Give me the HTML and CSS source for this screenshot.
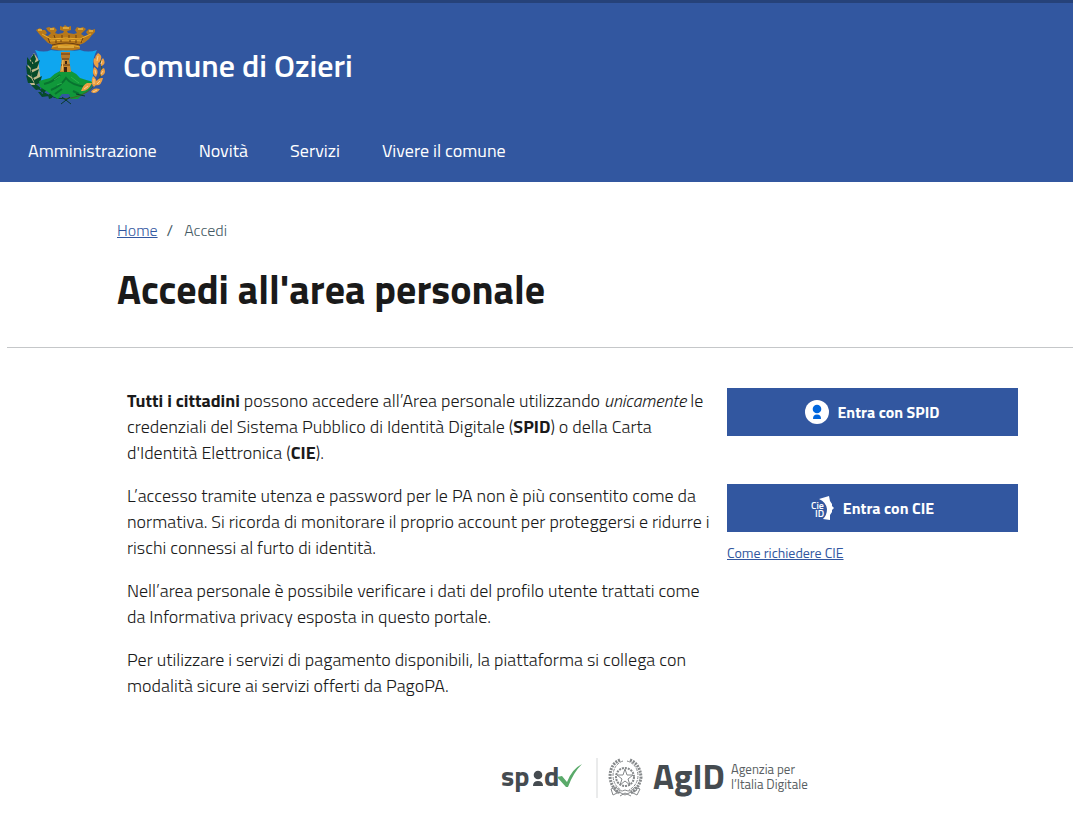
FILE: index.html
```html
<!DOCTYPE html>
<html lang="it">
<head>
  <meta charset="UTF-8">
  <meta name="viewport" content="width=device-width, initial-scale=1.0">
  <title>Accedi all'area personale - Comune di Ozieri</title>
  <link rel="stylesheet" href="styles.css">
</head>
<body>
  <header class="header">
    <div class="brand">
      <svg class="crest" viewBox="0 0 80 80" aria-hidden="true">
        <!-- Shield -->
        <path d="M9 25Q18 28 25 25Q33 27 40 24Q47 27 54 25Q62 28 71 25Q67 32 67 41V57H13V40Q13 32 9 25Z" fill="#0fa6ef"/>
        <!-- Laurel -->
        <path d="M8 28Q-1 40 2 50Q2 60 8 61L15 57L12 34Z" fill="#bfb98b"/>
        <path d="M8 29Q1 45 11 62Q22 74 41 74" stroke="#073f26" stroke-width="1" fill="none"/>
        <path d="M8 29L10 34L8 39L4 34ZM5 37L1 32L1 39L5 43ZM6 39L14 35L11 43L5 45ZM4 44L0 40L1 49L6 52ZM5 48L13 44L11 51L7 53ZM5 53L0 50L2 58L8 58ZM8 55L16 51L14 58L9 60ZM11 60L5 60L10 65L16 64ZM14 63L20 58L20 66L16 69ZM18 67L12 67L16 72L23 71ZM22 70L28 66L26 73L23 74Z" fill="#064b2a"/>
        <!-- Hill -->
        <path d="M13 56Q20 54 24 53Q29 48 34 46H45Q50 48 54 53Q60 55 67 57Q65 66 56 70L52 74H45L43 69H36L32 74L27 71L22 67L14 62Z" fill="#10983a"/>
        <path d="M18 59Q27 57 34 50M25 65Q35 61 40 53Q45 60 60 62M29 69L36 64M47 66L53 69" stroke="#087330" stroke-width="2" fill="none"/>
        <path d="M28 55L34 51M45 52L53 58M31 60L36 58" stroke="#28b14a" stroke-width="1" fill="none"/>
        <!-- Tower -->
        <path d="M36 33H43L45 47H34Z" fill="#c98a31"/>
        <path d="M35 27H44V32L43 35H36L35 32Z" fill="#b67b2a"/>
        <path d="M35 29H44M36 34H43M35 40H44" stroke="#613915" stroke-width="1"/>
        <path d="M39 36H41V39H39ZM38 42H41V47H38Z" fill="#3c240f"/>
        <path d="M37 35L36 46" stroke="#f1c565" stroke-width="1"/>
        <!-- Crown -->
        <path d="M10 5L14 3L16 5L19 5L21 8L19 10L22 11L25 8L22 6L20 3L23 2L25 3L28 2L31 5L29 8L32 9L37 8L38 6L34 5L34 1L37 2L39 0L42 2L45 1L45 5L41 6L42 8L48 9L51 8L49 5L51 2L54 3L57 2L60 4L57 7L55 9L58 11L62 10L60 7L63 4L66 5L69 4L69 7L66 10L63 14L58 18L53 20L54 24Q40 27 25 24L27 20L22 18L18 14L14 10Z" fill="#b77819"/>
        <path d="M16 9L25 14Q40 12 54 14L65 9M23 16Q40 14 57 16M26 22Q40 18 54 22" stroke="#e9ac2e" stroke-width="1" fill="none"/>
        <path d="M22 13L24 18M28 10L29 13M30 15V18M36 10V13M35 15V17M44 15V17M43 10V13M50 10V13M50 15V18M57 13L55 18M26 20Q40 16 54 20" stroke="#6c3f11" stroke-width="1" fill="none"/>
        <path d="M12 5H16M24 4H28M37 3H43M52 4H57M63 6H67M32 22H48" stroke="#ffd35d" stroke-width="1"/>
        <!-- Oak -->
        <path d="M72 30Q82 48 67 62Q58 72 38 74" stroke="#456023" stroke-width="1" fill="none"/>
        <path d="M72 28Q66 34 73 38Q78 31 72 28ZM68 33Q66 40 72 43Q74 36 68 33ZM77 33Q74 35 75 41Q81 39 77 33ZM68 42Q65 49 70 52Q74 45 68 42ZM78 43Q73 45 75 51Q81 49 78 43ZM67 51Q64 58 68 62Q74 57 67 51ZM77 53Q71 52 69 60Q75 62 77 53ZM61 58Q57 60 55 66Q62 67 66 58ZM74 64Q67 62 65 67Q70 70 74 64Z" fill="#ed9f42"/>
        <path d="M72 31L71 36M76 36L75 39M69 45L70 49M77 46L75 49M68 54V59M74 56L71 59M62 61L58 64M71 65L67 67" stroke="#f8d296" stroke-width="1"/>
        <path d="M50 69L59 71M35 79L44 72M45 79L36 72" stroke="#083d2b" stroke-width="1"/>
      </svg>
      <span class="brand-name">Comune di Ozieri</span>
    </div>
    <nav class="nav">
      <a href="#">Amministrazione</a>
      <a href="#">Novità</a>
      <a href="#">Servizi</a>
      <a href="#">Vivere il comune</a>
    </nav>
  </header>

  <main>
    <div class="page-title">
      <nav class="breadcrumb" aria-label="Percorso">
        <a href="#">Home</a>
        <span class="separator">/</span>
        <span>Accedi</span>
      </nav>
      <h1>Accedi all'area personale</h1>
    </div>

    <div class="content">
      <div class="description">
        <p><strong>Tutti i cittadini</strong> possono accedere all’Area personale utilizzando <em>unicamente</em> le credenziali del Sistema Pubblico di Identità Digitale (<strong>SPID</strong>) o della Carta d'Identità Elettronica (<strong>CIE</strong>).</p>
        <p>L’accesso tramite utenza e password per le PA non è più consentito come da normativa. Si ricorda di monitorare il proprio account per proteggersi e ridurre i rischi connessi al furto di identità.</p>
        <p>Nell’area personale è possibile verificare i dati del profilo utente trattati come da Informativa privacy esposta in questo portale.</p>
        <p>Per utilizzare i servizi di pagamento disponibili, la piattaforma si collega con modalità sicure ai servizi offerti da PagoPA.</p>
      </div>
      <div class="access">
        <button class="btn" type="button">
          <svg width="24" height="24" viewBox="0 0 24 24" aria-hidden="true">
            <circle cx="12" cy="12" r="12" fill="#fff"/>
            <circle cx="12" cy="9" r="4.3" fill="#06d"/>
            <path d="M8 19C8 16 9 14.5 12 14.5S16 16 16 19Z" fill="#06d"/>
          </svg>
          Entra con SPID
        </button>
        <button class="btn" type="button">
          <svg width="24" height="24" viewBox="0 0 24 24" aria-hidden="true">
            <path d="M8 3L18 0L19 5L21 8L21 10L23 12L21 14L21 16L19 19L19 24L12 23Q16 19 16 13Q15 6 8 3Z" fill="#fff"/>
            <text class="cie-text" x="0" y="13">Cie</text>
            <text class="cie-text" x="4" y="21">ID</text>
          </svg>
          Entra con CIE
        </button>
        <a class="help-link" href="#">Come richiedere CIE</a>
      </div>
    </div>
  </main>

  <footer class="footer">
    <svg class="partners" viewBox="0 0 308 42" role="img" aria-label="SPID, AgID Agenzia per l'Italia Digitale">
      <text class="spid-text" x="0" y="29">sp</text>
      <circle cx="37" cy="18" r="4.3" fill="#454b50"/>
      <path d="M32 29Q32 24 37 24T42 29Z" fill="#454b50"/>
      <text class="spid-text" x="43" y="29">d</text>
      <path d="M56 20L61 19L66 25Q71 12 81 7Q72 16 67 30H65Z" fill="#5aaa6a"/>
      <path d="M96 1V41" stroke="#d5d7d8"/>
      <!-- Emblem of the Republic -->
      <g fill="none" stroke="#85888a">
        <circle cx="124" cy="20" r="9" stroke-width="2" stroke-dasharray="2 1"/>
        <path d="M124 12L126 18L132 18L127 22L129 28L124 24L119 28L121 22L116 18L122 18Z" fill="#fff"/>
        <path d="M119 3Q109 7 109 20Q110 30 118 36M129 3Q139 7 140 20Q139 30 130 36" stroke-width="3" stroke-dasharray="2 1"/>
        <path d="M122 4Q113 7 112 18Q112 28 120 33M126 4Q136 7 137 18Q137 28 128 33" stroke-dasharray="3 1"/>
        <path d="M110 32L115 30Q119 36 124 33Q130 36 134 30L139 32L136 38L130 35L124 38L118 35L112 38ZM113 33L119 36M136 33L130 36M119 39L124 36L130 39"/>
      </g>
      <text class="agid-text" x="152" y="32">AgID</text>
      <text class="agency-text" x="230" y="17">Agenzia per</text>
      <text class="agency-text" x="230" y="32">l’Italia Digitale</text>
    </svg>
  </footer>
</body>
</html>
```
FILE: styles.css
```css
* {
  margin: 0;
  padding: 0;
  box-sizing: border-box;
}

body {
  font-family: 'Titillium Web', Lato, sans-serif;
  font-size: 18px;
  font-weight: 300;
  line-height: 26px;
  color: #1a1a1a;
  background: #fff;
}

a {
  color: #3257a0;
}

strong {
  font-weight: 700;
}

/* Header */
.header {
  background: #3257a0;
  border-top: 3px solid #264279;
  color: #fff;
  padding: 22px 26px 18px;
}

.brand {
  display: flex;
  align-items: center;
  gap: 17px;
}

.crest {
  width: 80px;
  height: 80px;
}

.brand-name {
  font-size: 32px;
  line-height: 36px;
  font-weight: 600;
}

.nav {
  display: flex;
  gap: 42px;
  margin-top: 33px;
  padding-left: 2px;
}

.nav a {
  color: #fff;
  font-weight: 400;
  text-decoration: none;
}

/* Title */
.page-title {
  margin-left: 7px;
  padding: 35px 110px 32px;
  border-bottom: 1px solid #c5c7c9;
}

.breadcrumb {
  display: flex;
  gap: 9px;
  font-size: 16px;
  color: #455a64;
}

.separator {
  padding-right: 2px;
  font-weight: 400;
}

h1 {
  margin-top: 21px;
  font-size: 40px;
  line-height: 51px;
  font-weight: 700;
}

/* Content */
.content {
  display: grid;
  grid-template-columns: 2fr 1fr;
  column-gap: 18px;
  padding: 40px 55px 0 127px;
}

.description {
  margin-right: -8px;
}

.description p {
  margin-bottom: 17px;
}

.access {
  display: flex;
  flex-direction: column;
  align-items: flex-start;
}

.btn {
  display: flex;
  justify-content: center;
  align-items: center;
  gap: 8px;
  width: 100%;
  height: 48px;
  border: none;
  background: #3257a0;
  color: #fff;
  font-family: inherit;
  font-size: 16px;
  font-weight: 700;
  cursor: pointer;
}

.btn + .btn {
  margin-top: 48px;
}

.cie-text {
  font-size: 10px;
  font-weight: 600;
  fill: #fff;
  stroke: #3257a0;
  stroke-width: 1px;
  paint-order: stroke;
}

.help-link {
  margin-top: 8px;
  font-size: 14px;
  font-weight: 400;
}

/* Footer */
.footer {
  display: flex;
  justify-content: center;
  padding: 41px 0 24px 237px;
}

.partners {
  width: 308px;
  height: 42px;
  overflow: visible;
}

.spid-text {
  font-size: 28px;
  font-weight: 700;
  fill: #454b50;
}

.agid-text {
  font-size: 35px;
  font-weight: 700;
  fill: #454b50;
}

.agency-text {
  font-size: 13px;
  font-weight: 400;
  fill: #5a5f63;
}

@media (max-width: 768px) {
  .nav {
    flex-wrap: wrap;
    gap: 16px;
  }

  .page-title {
    padding: 24px 20px;
    margin-left: 0;
  }

  .content {
    grid-template-columns: 1fr;
    padding: 24px 20px 0;
  }

  .description {
    margin-right: 0;
  }

  .footer {
    padding-left: 0;
  }
}
```
